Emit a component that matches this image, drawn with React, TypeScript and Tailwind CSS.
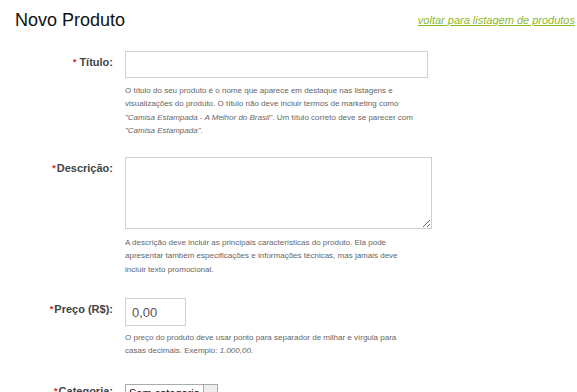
import React from "react";

const help = "w-[291px] text-[8px] leading-[13.3px] text-[#666]";

function Label({ text, spaced, top = "pt-[4px]" }: { text: string; spaced?: boolean; top?: string }) {
  return (
    <div className={`w-[113px] shrink-0 ${top} text-right text-[11px] font-bold leading-[14px] text-[#444]`}>
      <span className={`text-[#e02020] text-[9px] align-top ${spaced ? "mr-[3px]" : "mr-[1px]"}`}>*</span>
      {text}
    </div>
  );
}

export default function App() {
  return (
    <div className="h-[392px] w-[577px] overflow-hidden bg-white font-['Liberation_Sans',Arial,sans-serif]">
      <div className="flex items-center justify-between pl-[15px] pr-[2px] pt-[9px]">
        <h1 className="text-[18px] leading-[22px] text-[#111]">Novo Produto</h1>
        <a href="#" className="text-[11px] italic leading-[14px] text-[#8db82a] underline">
          voltar para listagem de produtos
        </a>
      </div>

      <div className="mt-[20px] flex">
        <Label text="Título:" spaced />
        <div className="ml-[12px]">
          <input className="block h-[27px] w-[303px] border border-[#cfcfcf] px-[6px] text-[13px] outline-none" />
          <p className={`${help} mt-[6px]`}>
            O título do seu produto é o nome que aparece em destaque nas listagens e visualizações do produto. O título não deve incluir termos de marketing como <i>"Camisa Estampada - A Melhor do Brasil"</i>. Um título correto deve se parecer com <i>"Camisa Estampada"</i>.
          </p>
        </div>
      </div>

      <div className="mt-[20px] flex">
        <Label text="Descrição:" />
        <div className="ml-[12px]">
          <textarea className="block h-[72px] w-[307px] border border-[#cfcfcf] px-[6px] text-[13px] outline-none" />
          <p className={`${help} mt-[7px]`}>
            A descrição deve incluir as principais características do produto. Ela pode apresentar também especificações e informações técnicas, mas jamais deve incluir texto promocional.
          </p>
        </div>
      </div>

      <div className="mt-[22px] flex">
        <Label text="Preço (R$):" />
        <div className="ml-[12px]">
          <input
            defaultValue="0,00"
            className="block h-[28px] w-[61px] border border-[#cfcfcf] px-[6px] text-[13px] text-[#555] outline-none"
          />
          <p className={`${help} mt-[5px]`}>
            O preço do produto deve usar ponto para separador de milhar e vírgula para casas decimais. Exemplo: <i>1.000,00</i>.
          </p>
        </div>
      </div>

      <div className="mt-[26px] flex">
        <Label text="Categoria:" top="pt-0" />
        <div className="ml-[12px] flex h-[18px] items-stretch border border-[#aaa] bg-white">
          <span className="px-[3px] text-[11px] leading-[16px] text-[#111]">Sem categoria</span>
          <span className="w-[14px] border-l border-[#aaa] bg-[#eee]" />
        </div>
      </div>
    </div>
  );
}
